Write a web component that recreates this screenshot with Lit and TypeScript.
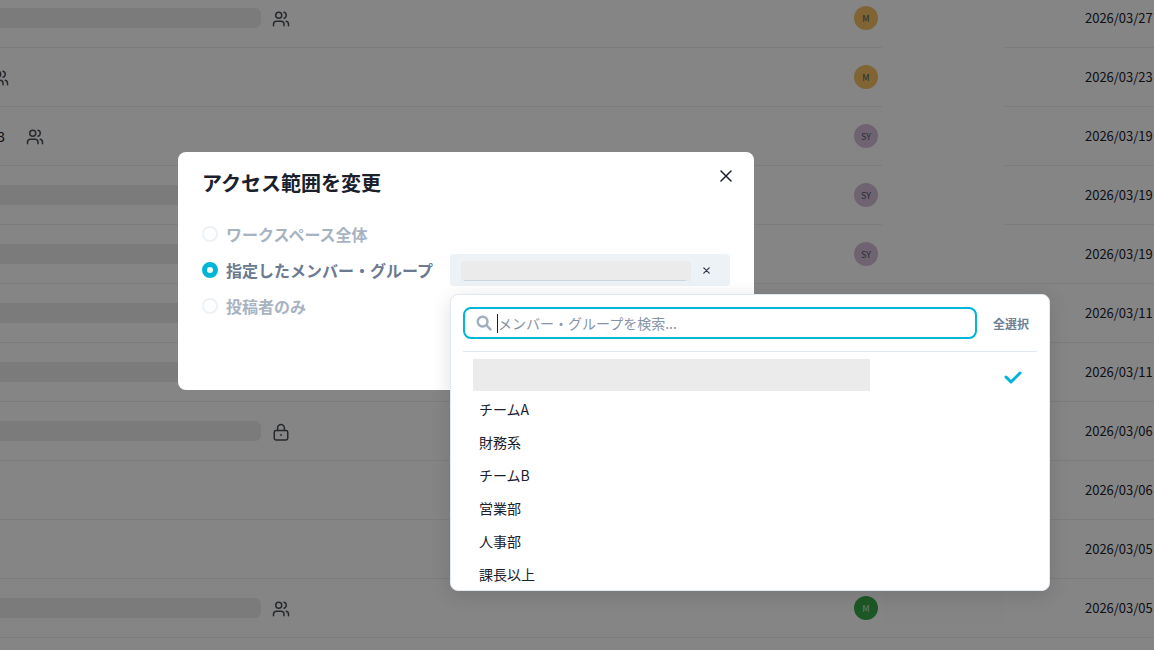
import { LitElement, html, css, svg, nothing } from "lit";
import { customElement } from "lit/decorators.js";

type Row = {
  bar?: number; shift?: number; text?: string; icon?: "users" | "lock";
  av?: string; color?: string; date: string; gap?: boolean; name?: boolean;
};

const ROWS: Row[] = [
  { bar: 261, icon: "users", av: "M", color: "#f5c065", date: "2026/03/27", gap: true },
  { shift: -9, icon: "users", av: "M", color: "#f5c065", date: "2026/03/23", gap: true },
  { text: "3", icon: "users", av: "SY", color: "#d6bfd8", date: "2026/03/19", gap: true },
  { bar: 261, av: "SY", color: "#d6bfd8", date: "2026/03/19", gap: true },
  { bar: 261, av: "SY", color: "#d6bfd8", date: "2026/03/19" },
  { bar: 261, date: "2026/03/11" },
  { bar: 261, date: "2026/03/11" },
  { bar: 261, icon: "lock", date: "2026/03/06" },
  { date: "2026/03/06" },
  { date: "2026/03/05" },
  { bar: 261, icon: "users", av: "M", color: "#38a848", date: "2026/03/05", name: true },
];

const usersIcon = svg`<path d="M16 21v-2a4 4 0 0 0-4-4H6a4 4 0 0 0-4 4v2"/><circle cx="9" cy="7" r="4"/><path d="M22 21v-2a4 4 0 0 0-3-3.87"/><path d="M16 3.13a4 4 0 0 1 0 7.75"/>`;
const lockIcon = svg`<rect x="3" y="10" width="18" height="12.5" rx="2.2"/><path d="M7.5 10V6.5a4.5 4.5 0 0 1 9 0V10"/><circle cx="12" cy="16" r="1.2" fill="currentColor" stroke="none"/>`;

@customElement("app-root")
export class AppRoot extends LitElement {
  static styles = css`
    :host {
      display: block;
      height: 650px;
      overflow: hidden;
      position: relative;
      background: #fff;
      font-family: "Noto Sans CJK JP", "Noto Sans", sans-serif;
      color: #1a202c;
    }
    .table { display: flex; flex-direction: column; margin-top: -11px; }
    .row {
      height: 59px;
      box-sizing: border-box;
      border-bottom: 1px solid #eeeeee;
      display: grid;
      grid-template-columns: 854px 231px 1fr;
      align-items: center;
      position: relative;
      font-size: 13px;
    }
    .title { display: flex; align-items: center; gap: 11px; min-width: 0; }
    .bar { height: 20px; background: #ebebeb; border-radius: 0 6px 6px 0; flex: none; }
    .num { font-size: 14px; margin-left: -4px; width: 9px; margin-right: 10px; text-align: right; }
    .icon { width: 18px; height: 18px; flex: none; fill: none; stroke: #4a4f57; stroke-width: 2; stroke-linecap: round; stroke-linejoin: round; margin-top: 1px; color: #4a4f57; }
    .avatar {
      width: 24px; height: 24px; border-radius: 50%;
      display: flex; align-items: center; justify-content: center;
      font-size: 9px; color: #4a5568;
    }
    .avatar.light { color: #cfe7d4; }
    .owner { display: flex; align-items: center; gap: 4px; }
    .name { width: 122px; height: 32px; background: #fdfdfd; }
    .gap { position: absolute; left: 882px; width: 122px; bottom: -1px; height: 1px; background: #fff; }
    .date { color: #1a202c; white-space: nowrap; padding-bottom: 2px; letter-spacing: -0.02px; }

    .backdrop {
      position: absolute; inset: 0;
      background: rgba(0, 0, 0, 0.48);
      padding: 152px 0 0 178px;
      box-sizing: border-box;
    }
    .dialog {
      width: 576px; height: 238px;
      box-sizing: border-box;
      background: #fff;
      border-radius: 8px;
      padding: 17px 24px;
      position: relative;
    }
    h2 { margin: 0 0 19px; font-size: 20px; line-height: 28px; font-weight: 700; color: #1a202c; }
    .close {
      position: absolute; top: 18px; right: 22px;
      width: 12px; height: 12px;
      fill: none; stroke: #1a202c; stroke-width: 1.5; stroke-linecap: round;
    }
    .opts { display: flex; flex-direction: column; }
    .opt { display: flex; align-items: center; height: 36px; gap: 8px; font-size: 16px; font-weight: 700; color: #a8b3c2; }
    .opt.on { color: #6b7a90; }
    .radio { width: 16px; height: 16px; box-sizing: border-box; border: 2px solid #edf2f7; border-radius: 50%; background: #fff; flex: none; }
    .on .radio { border: 5px solid #00b5d8; }
    .label { width: 216px; white-space: nowrap; flex: none; }
    .chip {
      width: 280px; height: 32px; box-sizing: border-box; flex: none;
      background: #edf2f7; border-radius: 4px;
      display: flex; align-items: center; padding: 0 20px 0 11px;
      justify-content: space-between;
    }
    .chip-mask { width: 230px; height: 20px; background: #ebebeb; border-radius: 2px; position: relative; margin-top: 1px; }
    .chip-mask::after { content: ""; position: absolute; left: 3px; right: 5px; bottom: 0; height: 1px; background: #cbd5e0; }
    .chip svg { width: 7px; height: 7px; fill: none; stroke: #2d3748; stroke-width: 1.2; stroke-linecap: round; }

    .dropdown {
      position: absolute; left: 272px; top: 142px;
      width: 600px; height: 297px;
      box-sizing: border-box;
      background: #fff;
      border: 1px solid #e2e8f0;
      border-radius: 8px;
      box-shadow: 0 4px 20px rgba(0,0,0,0.12);
      overflow: hidden;
      padding: 12px 12px 0;
      display: flex; flex-direction: column;
    }
    .searchrow { display: flex; align-items: center; gap: 16px; padding-bottom: 12px; border-bottom: 1px solid #e2e8f0; }
    .search {
      width: 514px; height: 32px; box-sizing: border-box;
      border: 2px solid #00b5d8; border-radius: 8px;
      display: flex; align-items: center; padding-left: 11px;
      font-size: 14px; color: #8794a8; white-space: nowrap;
    }
    .search svg { width: 16px; height: 16px; fill: none; stroke: #a0aec0; stroke-width: 2.4; stroke-linecap: round; flex: none; margin-right: 5px; }
    .caret { width: 1px; height: 19px; background: #1a202c; flex: none; }
    .all { font-size: 12px; font-weight: 700; color: #718096; white-space: nowrap; }
    .list { display: flex; flex-direction: column; padding: 7px 10px 0; }
    .selected { display: flex; align-items: center; justify-content: space-between; height: 32px; padding-right: 5px; }
    .mask { width: 397px; height: 32px; background: #ebebeb; }
    .check { width: 18px; height: 14px; fill: none; stroke: #00b5d8; stroke-width: 3; stroke-linecap: round; stroke-linejoin: round; margin-top: 4px; }
    .item { height: 33px; flex: none; display: flex; align-items: center; padding-left: 6px; font-size: 14px; color: #1a202c; }
    .items { display: flex; flex-direction: column; padding-top: 1px; }
  `;

  private row(r: Row) {
    return html`<div class="row">
      <div class="title" style=${r.shift ? `margin-left:${r.shift}px` : ""}>
        ${r.bar ? html`<div class="bar" style="width:${r.bar}px"></div>` : nothing}
        ${r.text ? html`<span class="num">${r.text}</span>` : nothing}
        ${r.icon
          ? html`<svg class="icon" viewBox="0 0 24 24">${r.icon === "users" ? usersIcon : lockIcon}</svg>`
          : nothing}
      </div>
      <div class="owner">
        ${r.av
          ? html`<div class="avatar ${r.name ? "light" : ""}" style="background:${r.color}">${r.av}</div>`
          : nothing}
        ${r.name ? html`<div class="name"></div>` : nothing}
      </div>
      <div class="date">${r.date}</div>
      ${r.gap ? html`<div class="gap"></div>` : nothing}
    </div>`;
  }

  render() {
    return html`
      <div class="table">${ROWS.map((r) => this.row(r))}</div>
      <div class="backdrop">
        <div class="dialog">
          <h2>アクセス範囲を変更</h2>
          <svg class="close" viewBox="0 0 12 12"><path d="M1 1l10 10M11 1L1 11"/></svg>
          <div class="opts">
            <div class="opt"><span class="radio"></span><span class="label">ワークスペース全体</span></div>
            <div class="opt on">
              <span class="radio"></span><span class="label">指定したメンバー・グループ</span>
              <div class="chip">
                <div class="chip-mask"></div>
                <svg viewBox="0 0 7 7"><path d="M.8.8l5.4 5.4M6.2.8L.8 6.2"/></svg>
              </div>
            </div>
            <div class="opt"><span class="radio"></span><span class="label">投稿者のみ</span></div>
          </div>
          <div class="dropdown">
            <div class="searchrow">
              <div class="search">
                <svg viewBox="0 0 16 16"><circle cx="6.6" cy="6.6" r="4.9"/><path d="M10.4 10.4l4 4"/></svg>
                <span class="caret"></span>メンバー・グループを検索...
              </div>
              <span class="all">全選択</span>
            </div>
            <div class="list">
              <div class="selected">
                <div class="mask"></div>
                <svg class="check" viewBox="0 0 18 14"><path d="M2 7l5 5 9-9"/></svg>
              </div>
              <div class="items">
                ${["チームA", "財務系", "チームB", "営業部", "人事部", "課長以上"].map(
                  (t) => html`<div class="item">${t}</div>`
                )}
              </div>
            </div>
          </div>
        </div>
      </div>
    `;
  }
}
